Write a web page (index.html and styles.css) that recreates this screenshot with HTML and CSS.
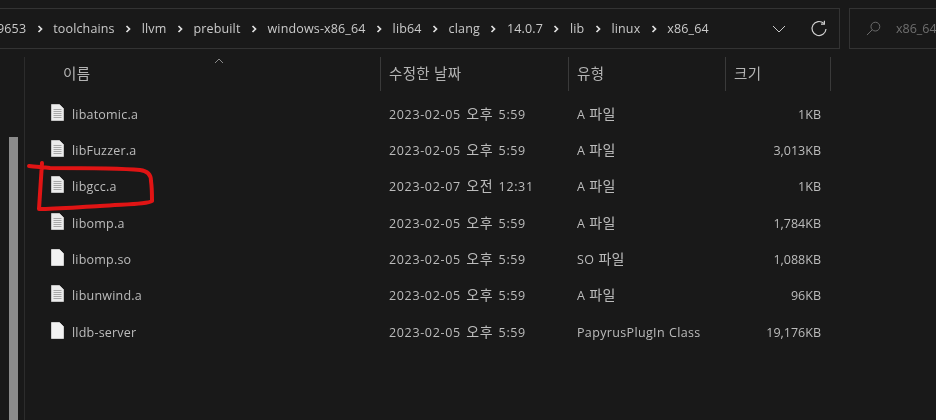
FILE: index.html
```html
<!DOCTYPE html>
<html lang="ko">
<head>
<meta charset="utf-8">
<title>x86_64</title>
<link rel="stylesheet" href="styles.css">
</head>
<body>
<div class="window">
  <div class="toolbar">
    <div class="address">
      <div class="path">
        <span>9653</span><svg class="chev" viewBox="0 0 6 8"><path d="M1.5 1 4.5 4 1.5 7"/></svg>
        <span>toolchains</span><svg class="chev" viewBox="0 0 6 8"><path d="M1.5 1 4.5 4 1.5 7"/></svg>
        <span>llvm</span><svg class="chev" viewBox="0 0 6 8"><path d="M1.5 1 4.5 4 1.5 7"/></svg>
        <span>prebuilt</span><svg class="chev" viewBox="0 0 6 8"><path d="M1.5 1 4.5 4 1.5 7"/></svg>
        <span>windows-x86_64</span><svg class="chev" viewBox="0 0 6 8"><path d="M1.5 1 4.5 4 1.5 7"/></svg>
        <span>lib64</span><svg class="chev" viewBox="0 0 6 8"><path d="M1.5 1 4.5 4 1.5 7"/></svg>
        <span>clang</span><svg class="chev" viewBox="0 0 6 8"><path d="M1.5 1 4.5 4 1.5 7"/></svg>
        <span>14.0.7</span><svg class="chev" viewBox="0 0 6 8"><path d="M1.5 1 4.5 4 1.5 7"/></svg>
        <span>lib</span><svg class="chev" viewBox="0 0 6 8"><path d="M1.5 1 4.5 4 1.5 7"/></svg>
        <span>linux</span><svg class="chev" viewBox="0 0 6 8"><path d="M1.5 1 4.5 4 1.5 7"/></svg>
        <span>x86_64</span>
      </div>
      <svg class="dropdown" viewBox="0 0 14 8"><path d="M1 1 7 7 13 1"/></svg>
      <svg class="refresh" viewBox="0 0 18 18"><path d="M13.8 3.4A7 7 0 1 0 16 9"/><path d="M14.4 .8V4.2H11"/></svg>
    </div>
    <div class="search">
      <svg class="glass" viewBox="0 0 16 16"><circle cx="10" cy="6" r="4.7"/><path d="M6.6 9.4 1 15"/></svg>
      <span>x86_64</span>
    </div>
  </div>
  <div class="body">
    <div class="side"><div class="thumb"></div></div>
    <div class="content">
      <div class="head">
        <div class="hcell hname">이름<svg class="sort" viewBox="0 0 10 6"><path d="M1 5 5 1 9 5"/></svg></div>
        <div class="hcell">수정한 날짜</div>
        <div class="hcell">유형</div>
        <div class="hcell">크기</div>
      </div>
      <div class="row"><div class="name"><svg class="file" viewBox="0 0 13 17"><use href="#lined"/></svg>libatomic.a</div><div class="date">2023-02-05 <span class="ko">오후</span> 5:59</div><div class="type">A <span class="ko">파일</span></div><div class="size">1KB</div></div>
      <div class="row"><div class="name"><svg class="file" viewBox="0 0 13 17"><use href="#lined"/></svg>libFuzzer.a</div><div class="date">2023-02-05 <span class="ko">오후</span> 5:59</div><div class="type">A <span class="ko">파일</span></div><div class="size">3,013KB</div></div>
      <div class="row"><div class="name"><svg class="file" viewBox="0 0 13 17"><use href="#lined"/></svg>libgcc.a</div><div class="date">2023-02-07 <span class="ko">오전</span> 12:31</div><div class="type">A <span class="ko">파일</span></div><div class="size">1KB</div></div>
      <div class="row"><div class="name"><svg class="file" viewBox="0 0 13 17"><use href="#lined"/></svg>libomp.a</div><div class="date">2023-02-05 <span class="ko">오후</span> 5:59</div><div class="type">A <span class="ko">파일</span></div><div class="size">1,784KB</div></div>
      <div class="row"><div class="name"><svg class="file" viewBox="0 0 13 17"><use href="#plain"/></svg>libomp.so</div><div class="date">2023-02-05 <span class="ko">오후</span> 5:59</div><div class="type">SO <span class="ko">파일</span></div><div class="size">1,088KB</div></div>
      <div class="row"><div class="name"><svg class="file" viewBox="0 0 13 17"><use href="#lined"/></svg>libunwind.a</div><div class="date">2023-02-05 <span class="ko">오후</span> 5:59</div><div class="type">A <span class="ko">파일</span></div><div class="size">96KB</div></div>
      <div class="row"><div class="name"><svg class="file" viewBox="0 0 13 17"><use href="#plain"/></svg>lldb-server</div><div class="date">2023-02-05 <span class="ko">오후</span> 5:59</div><div class="type">PapyrusPlugIn Class</div><div class="size">19,176KB</div></div>
    </div>
  </div>
  <svg class="scribble" viewBox="0 0 936 420"><path d="M29 166C36 167 42 167 50 168C80 168 118 168 140 170C148 171 151 175 151 181C152 188 152 196 152 201C148 204 130 204 100 206C80 207 55 209 39 209C40 195 41 180 42 163"/></svg>
</div>
<svg class="defs" width="0" height="0">
  <defs>
    <g id="plain"><path class="sheet" d="M.5 .5H8.5L12.5 4.5V16.5H.5Z"/></g>
    <g id="lined"><path class="sheet2" d="M.5 .5H8.5L12.5 4.5V16.5H.5Z"/><path class="lines" d="M2.5 5.5H10.5M2.5 7.5H10.5M2.5 9.5H10.5M2.5 11.5H10.5M2.5 13.5H10.5"/></g>
  </defs>
</svg>
</body>
</html>
```
FILE: styles.css
```css
html, body {
  margin: 0;
  padding: 0;
  background: #191919;
}
body {
  width: 936px;
  height: 420px;
  overflow: hidden;
  font-family: "Open Sans", "Noto Sans CJK KR", sans-serif;
  font-size: 12.5px;
  color: #bcbcbc;
}
.window {
  position: relative;
  width: 936px;
  height: 420px;
  padding-top: 8px;
  box-sizing: border-box;
  filter: blur(0.35px);
}
.toolbar {
  display: flex;
  gap: 9px;
  height: 41px;
}
.address {
  width: 840px;
  flex: none;
  box-sizing: border-box;
  border: 1px solid #333;
  border-left: 0;
  display: flex;
  align-items: center;
  overflow: hidden;
}
.path {
  display: flex;
  align-items: center;
  gap: 10.5px;
  margin-left: -3px;
  flex: 1;
  color: #cacaca;
  letter-spacing: 0.15px;
  white-space: nowrap;
}
.chev {
  width: 6px;
  height: 8px;
  fill: none;
  stroke: #e0e0e0;
  stroke-width: 1.7;
}
.dropdown {
  width: 14px;
  height: 8px;
  fill: none;
  stroke: #c8c8c8;
  stroke-width: 1;
  margin-right: 24px;
}
.refresh {
  width: 18px;
  height: 18px;
  fill: none;
  stroke: #d0d0d0;
  stroke-width: 1.2;
  margin-right: 11px;
}
.search {
  flex: 1;
  box-sizing: border-box;
  border: 1px solid #333;
  border-right: 0;
  display: flex;
  align-items: center;
  padding-left: 16px;
  gap: 15px;
  color: #6f6f6f;
  overflow: hidden;
  white-space: nowrap;
}
.glass {
  width: 15px;
  height: 15px;
  fill: none;
  stroke: #6f6f6f;
  stroke-width: 1;
  flex: none;
}
.body {
  display: flex;
  height: 371px;
}
.side {
  width: 25px;
  flex: none;
  box-sizing: border-box;
  border-right: 1px solid #2c2c2c;
  margin-top: 8px;
  position: relative;
}
.thumb {
  position: absolute;
  left: 9px;
  top: 80px;
  bottom: 0;
  width: 9px;
  background: #8b8b8b;
}
.content {
  flex: 1;
  padding-top: 8px;
}
.head {
  display: grid;
  grid-template-columns: 356px 188px 157px 105px;
  height: 31px;
  margin-bottom: 8px;
  font-size: 14.5px;
  letter-spacing: 0.3px;
  color: #b4b4b4;
}
.hcell {
  border-right: 1px solid #3a3a3a;
  padding-left: 8px;
  line-height: 34px;
  box-sizing: border-box;
}
.hname {
  position: relative;
  padding-left: 38px;
}
.sort {
  position: absolute;
  left: 189px;
  top: 1px;
  width: 10px;
  height: 6px;
  fill: none;
  stroke: #8a8a8a;
  stroke-width: 1;
}
.row {
  display: grid;
  grid-template-columns: 356px 188px 157px 96px;
  height: 36.33px;
  align-items: center;
}
.row > .date,
.row > .type {
  padding-left: 8px;
  white-space: nowrap;
}
.date {
  letter-spacing: 0.65px;
  word-spacing: 1.5px;
}
.type {
  letter-spacing: 0.35px;
  word-spacing: 0.5px;
}
.ko {
  font-size: 14px;
  line-height: 1;
}
.name {
  display: flex;
  align-items: center;
  gap: 8px;
  padding-left: 26px;
  letter-spacing: 0.2px;
}
.size {
  text-align: right;
  margin-right: 1px;
}
.file {
  width: 13px;
  height: 17px;
  margin-top: -4px;
  flex: none;
}
.defs {
  position: absolute;
}
.sheet {
  fill: #f2f2f2;
  stroke: #cfcfcf;
}
.sheet2 {
  fill: #ececec;
  stroke: #c4c4c4;
}
.lines {
  fill: none;
  stroke: #a8a8a8;
  stroke-width: 1;
}
.scribble {
  position: absolute;
  left: 0;
  top: 0;
  width: 936px;
  height: 420px;
  fill: none;
  stroke: #e01414;
  stroke-width: 4;
  stroke-linecap: round;
  stroke-linejoin: round;
  pointer-events: none;
}
```
